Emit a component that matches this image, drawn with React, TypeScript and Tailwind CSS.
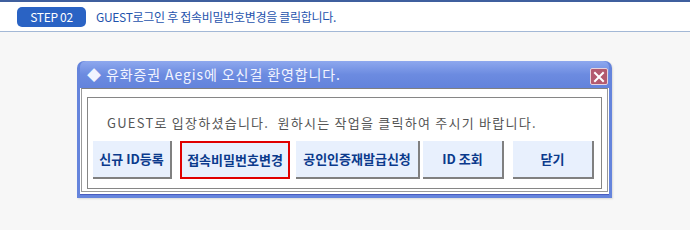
import React from "react";

const korean = { fontFamily: '"Noto Sans CJK KR", "Noto Sans", sans-serif' };
const gulim = { fontFamily: '"Noto Sans CJK KR", "DejaVu Sans", sans-serif' };

interface ActionButton {
  label: string;
  width: string;
  margin: string;
  active?: boolean;
}

const buttons: ActionButton[] = [
  { label: "신규 ID등록", width: "w-[79px]", margin: "ml-[5px]" },
  { label: "접속비밀번호변경", width: "w-[110px]", margin: "ml-[8px]", active: true },
  { label: "공인인증재발급신청", width: "w-[124px]", margin: "ml-[6px]" },
  { label: "ID 조회", width: "w-[81px]", margin: "ml-[3px]" },
  { label: "닫기", width: "w-[81px]", margin: "ml-[9px]" },
];

function CloseIcon() {
  return (
    <svg width="12" height="12" viewBox="0 0 12 12">
      <path d="M2 2 L10 10 M10 2 L2 10" stroke="#ffffff" strokeWidth="2" strokeLinecap="square" />
    </svg>
  );
}

export default function App() {
  return (
    <div className="w-[690px] h-[230px] bg-[#f7f7f7] overflow-hidden" style={korean}>
      {/* Step header */}
      <div className="h-[32px] bg-white border-t-[2px] border-[#3f5f9e] border-b border-b-[#a3b8d6] flex items-center pl-[17px]">
        <div className="w-[69px] h-[20px] rounded-[5px] bg-[#2a63c4] text-white text-[12px] flex items-center justify-center tracking-[-0.3px]">
          STEP 02
        </div>
        <div className="ml-[10px] text-[12px] text-[#1f54ad] tracking-[-0.3px]">
          GUEST로그인 후 접속비밀번호변경을 클릭합니다.
        </div>
      </div>

      {/* Dialog */}
      <div className="ml-[77px] mt-[29px] w-[535px] h-[137px] flex flex-col rounded-t-[7px] bg-[#6584dc] p-[3px] pt-0 shadow-[1px_1px_2px_rgba(0,0,0,0.12)]">
        <div className="h-[27px] flex items-center justify-between rounded-t-[6px] bg-gradient-to-b from-[#8ea8ee] via-[#6c8be0] to-[#6383dc] pl-[7px] pr-[1px]">
          <div className="text-[14px] text-[#f2f4ff] tracking-[0.9px]" style={gulim}>
            ◆ 유화증권 Aegis에 오신걸 환영합니다.
          </div>
          <div className="w-[18px] h-[17px] mt-[4px] rounded-[2px] border border-[#e8d3dc] bg-[#b35a6e] flex items-center justify-center">
            <CloseIcon />
          </div>
        </div>
        <div className="flex-1 bg-white border-b-[1px] border-[#4a5cc0] pl-[1px] pr-[1px] pb-[2px]">
          <div className="h-full border border-[#9a9a9a] border-t-[#808080] px-[5px] pt-[8px] pb-[2px]">
            <div className="h-full border border-[#868686] flex flex-col">
              <div className="pl-[19px] pt-[17px] text-[13px] leading-[16px] text-[#555555] tracking-[1.25px]" style={gulim}>
                GUEST로 입장하셨습니다.&nbsp; 원하시는 작업을 클릭하여 주시기 바랍니다.
              </div>
              <div className="flex mt-[10px]">
                {buttons.map((b) =>
                  b.active ? (
                    <div
                      key={b.label}
                      className={`${b.width} ${b.margin} h-[38px] border-2 border-[#e00000] bg-[#e8f0fd] flex items-center justify-center text-[13px] font-bold text-[#0b3a8c] tracking-[0px]`}
                    >
                      {b.label}
                    </div>
                  ) : (
                    <div
                      key={b.label}
                      className={`${b.width} ${b.margin} h-[38px] border-r-2 border-b-2 border-[#808080] bg-[#e8f0fd] flex items-center justify-center text-[13px] font-bold text-[#0b3a8c] tracking-[0px]`}
                    >
                      {b.label}
                    </div>
                  )
                )}
              </div>
            </div>
          </div>
        </div>
      </div>
    </div>
  );
}
